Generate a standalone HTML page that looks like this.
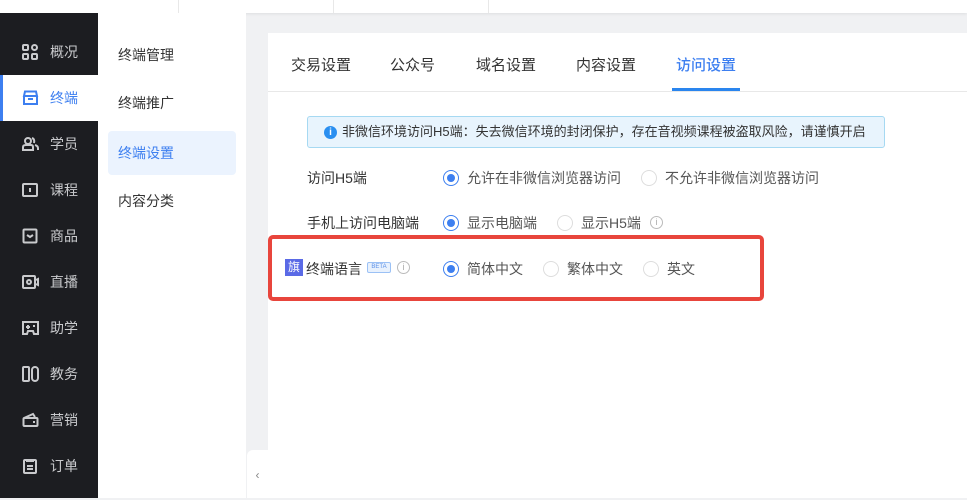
<!DOCTYPE html>
<html><head><meta charset="utf-8"><style>
*{margin:0;padding:0;box-sizing:border-box}
body{width:967px;height:498px;overflow:hidden;background:#f0f1f3;font-family:"Liberation Sans","Noto Sans CJK SC",sans-serif;font-size:14px;color:#333;position:relative}
.top{position:absolute;left:0;top:0;width:967px;height:13px;background:#fff;box-shadow:0 1px 3px rgba(0,0,0,.08)}
.top i{position:absolute;top:0;width:1px;height:13px;background:#e8e8e8}
.side{position:absolute;left:0;top:13px;width:98px;height:485px;background:#1c1d21}
.it{position:absolute;left:0;width:98px;height:46px;color:#c9cacd;font-size:14px}
.it span{position:absolute;left:50px;top:13px}
.it svg{position:absolute;left:22px;top:15px}
.act{background:#fff;color:#3d7ff0}
.act:before{content:"";position:absolute;left:0;top:0;width:3px;height:46px;background:#3d7ff0}
.sub{position:absolute;left:98px;top:13px;width:148px;height:485px;background:#fff}
.sub div{position:absolute;left:10px;width:128px;height:44px;line-height:44px;padding-left:10px;color:#333;font-size:14px}
.sub .on{background:#ebf3fe;color:#3d7ff0;border-radius:4px}
.card{position:absolute;left:268px;top:33px;width:699px;height:465px;background:#fff}
.tab{position:absolute;top:21px;font-size:15px;color:#333}
.line{position:absolute;left:0;top:58px;width:699px;height:1px;background:#e8e8e8}
.alert{position:absolute;left:307px;top:116px;width:578px;height:32px;background:#e8f4fd;border:1px solid #a6d9f2;border-radius:3px;font-size:13px;line-height:30px;padding-left:34px;color:#333}
.alert b{position:absolute;left:16px;top:9px;width:13px;height:13px;border-radius:50%;background:#2a8ff0;color:#fff;font-size:10px;line-height:13px;text-align:center;font-weight:bold}
.lbl{position:absolute;font-size:14px;color:#333}
.r{position:absolute;font-size:14px;color:#555;padding-left:24px}
.r:before{content:"";position:absolute;left:0;top:2px;width:14px;height:14px;border:1px solid #ddd;border-radius:50%;background:#fff}
.r.c:before{border-color:#3d7ff0}
.r.c:after{content:"";position:absolute;left:4px;top:6px;width:8px;height:8px;border-radius:50%;background:#3d7ff0}
.info{position:absolute;width:13px;height:13px;border:1px solid #bbb;border-radius:50%;font-size:9px;line-height:11px;text-align:center;color:#aaa}
.red{position:absolute;left:268px;top:235px;width:496px;height:66px;border:4px solid #e8453c;border-radius:5px}
.handle{position:absolute;left:247px;top:450px;width:21px;height:48px;background:#fff;border-radius:6px 0 0 0;color:#888;font-size:12px;line-height:50px;text-align:center}
</style></head><body>
<div class="top"><i style="left:178px"></i><i style="left:333px"></i><i style="left:488px"></i></div>
<div class="side">
 <div class="it" style="top:16px"><svg width="16" height="16" viewBox="0 0 16 16" fill="none" stroke="#c9cacd" stroke-width="2"><rect x="1" y="1" width="5" height="5" rx="1"/><rect x="10" y="1" width="5" height="5" rx="2.5"/><rect x="1" y="10" width="5" height="5" rx="1"/><rect x="10" y="10" width="5" height="5" rx="1"/></svg><span>概况</span></div>
 <div class="it act" style="top:62px"><svg width="17" height="16" viewBox="0 0 17 16" fill="none" stroke="#3d7ff0" stroke-width="2"><path d="M2 6 L3 1.5 H14 L15 6 Z"/><path d="M2 6 V14 H15 V6"/><path d="M6 9 H11"/></svg><span>终端</span></div>
 <div class="it" style="top:108px"><svg width="17" height="16" viewBox="0 0 17 16" fill="none" stroke="#c9cacd" stroke-width="2"><circle cx="6" cy="5" r="3"/><path d="M1 14 V11 Q1 9 4 9 H9 Q11 9 11 11 V14 Z"/><path d="M10 2 Q13 3 12 7 M13 9 Q16 10 16 12 V14"/></svg><span>学员</span></div>
 <div class="it" style="top:154px"><svg width="16" height="16" viewBox="0 0 16 16" fill="none" stroke="#c9cacd" stroke-width="2"><rect x="1" y="2" width="14" height="12" rx="1"/><path d="M8 6 V10"/></svg><span>课程</span></div>
 <div class="it" style="top:200px"><svg width="16" height="16" viewBox="0 0 16 16" fill="none" stroke="#c9cacd" stroke-width="2"><rect x="1.5" y="1.5" width="13" height="13" rx="1"/><path d="M5 7 L8 9 L11 7"/></svg><span>商品</span></div>
 <div class="it" style="top:246px"><svg width="17" height="16" viewBox="0 0 17 16" fill="none" stroke="#c9cacd" stroke-width="2"><rect x="1" y="2" width="12" height="12" rx="1"/><circle cx="7" cy="8" r="2"/><path d="M14 6 L16 5 V11 L14 10"/></svg><span>直播</span></div>
 <div class="it" style="top:292px"><svg width="17" height="16" viewBox="0 0 17 16" fill="none" stroke="#c9cacd" stroke-width="2"><path d="M1 2 H16 V14 H12 L11 11 H6 L5 14 H1 Z"/><path d="M4 7 H8 M6 5 V9 M11 6 H13"/></svg><span>助学</span></div>
 <div class="it" style="top:338px"><svg width="17" height="16" viewBox="0 0 17 16" fill="none" stroke="#c9cacd" stroke-width="2"><rect x="1" y="1" width="6" height="14" rx="1"/><rect x="10" y="1" width="6" height="14" rx="3"/></svg><span>教务</span></div>
 <div class="it" style="top:384px"><svg width="17" height="16" viewBox="0 0 17 16" fill="none" stroke="#c9cacd" stroke-width="2"><path d="M2 6 L11 2 L13 5"/><rect x="1.5" y="6" width="14" height="8" rx="1"/><path d="M12 9 V11"/></svg><span>营销</span></div>
 <div class="it" style="top:430px"><svg width="16" height="16" viewBox="0 0 16 16" fill="none" stroke="#c9cacd" stroke-width="2"><rect x="2" y="2" width="12" height="13" rx="1"/><path d="M5 1 V3 H11 V1 M5 8 H11 M5 11 H11"/></svg><span>订单</span></div>
</div>
<div class="sub">
 <div style="top:20px">终端管理</div>
 <div style="top:68px">终端推广</div>
 <div class="on" style="top:118px">终端设置</div>
 <div style="top:166px">内容分类</div>
</div>
<div class="card">
 <div class="tab" style="left:23px">交易设置</div>
 <div class="tab" style="left:122px">公众号</div>
 <div class="tab" style="left:208px">域名设置</div>
 <div class="tab" style="left:308px">内容设置</div>
 <div class="tab" style="left:408px;color:#3d7ff0;font-weight:500">访问设置</div>
 <div class="line"></div>
 <div style="position:absolute;left:404px;top:55px;width:68px;height:3px;background:#2a85ee"></div>
</div>
<div class="alert"><b>i</b>非微信环境访问H5端：失去微信环境的封闭保护，存在音视频课程被盗取风险，请谨慎开启</div>
<div class="lbl" style="left:307px;top:168px">访问H5端</div>
<div class="r c" style="left:443px;top:168px">允许在非微信浏览器访问</div>
<div class="r" style="left:641px;top:168px">不允许非微信浏览器访问</div>
<div class="lbl" style="left:307px;top:213px">手机上访问电脑端</div>
<div class="r c" style="left:443px;top:213px">显示电脑端</div>
<div class="r" style="left:557px;top:213px">显示H5端</div>
<div class="info" style="left:650px;top:216px">i</div>
<div class="red"></div>
<div style="position:absolute;left:285px;top:259px;width:18px;height:17px;background:#5a6ae6;color:#fff;font-size:12px;line-height:17px;text-align:center">旗</div>
<div class="lbl" style="left:306px;top:259px">终端语言</div>
<div style="position:absolute;left:367px;top:262px;width:24px;height:11px;border:1px solid #9bc1f5;background:#e8f1fd;color:#5a8fe8;font-size:6px;line-height:9px;text-align:center;border-radius:2px">BETA</div>
<div class="info" style="left:397px;top:261px">i</div>
<div class="r c" style="left:443px;top:259px">简体中文</div>
<div class="r" style="left:543px;top:259px">繁体中文</div>
<div class="r" style="left:643px;top:259px">英文</div>
<div class="handle">‹</div>
</body></html>
